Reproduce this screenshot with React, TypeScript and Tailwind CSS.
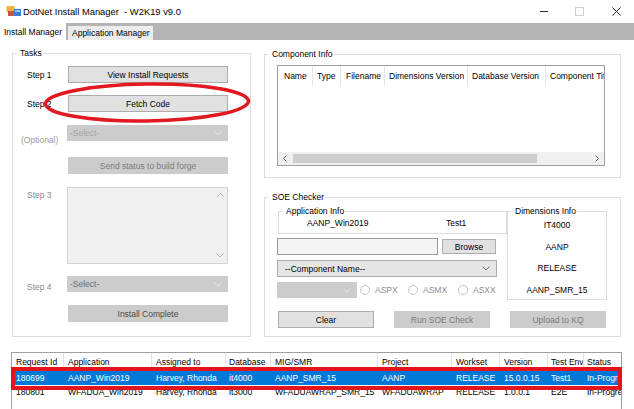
import React from 'react';

type Col = { label: string; w: string; pad: string };

const compCols: Col[] = [
  { label: 'Name', w: 'w-[35px]', pad: 'pl-[6px]' },
  { label: 'Type', w: 'w-[28px]', pad: 'pl-[4px]' },
  { label: 'Filename', w: 'w-[44px]', pad: 'pl-[5px]' },
  { label: 'Dimensions Version', w: 'w-[83px]', pad: 'pl-[4px]' },
  { label: 'Database Version', w: 'w-[78px]', pad: 'pl-[4px]' },
  { label: 'Component Title', w: 'w-[80px]', pad: 'pl-[4px]' },
];

const reqCols: Col[] = [
  { label: 'Request Id', w: 'w-[52px]', pad: 'pl-[4px]' },
  { label: 'Application', w: 'w-[88px]', pad: 'pl-[4px]' },
  { label: 'Assigned to', w: 'w-[74px]', pad: 'pl-[4px]' },
  { label: 'Database', w: 'w-[45px]', pad: 'pl-[3px]' },
  { label: 'MIG/SMR', w: 'w-[107px]', pad: 'pl-[4px]' },
  { label: 'Project', w: 'w-[74px]', pad: 'pl-[4px]' },
  { label: 'Workset', w: 'w-[48px]', pad: 'pl-[4px]' },
  { label: 'Version', w: 'w-[48px]', pad: 'pl-[4px]' },
  { label: 'Test Env', w: 'w-[36px]', pad: 'pl-[3px]' },
  { label: 'Status', w: 'w-[60px]', pad: 'pl-[3px]' },
];

const requests = [
  {
    id: '180699',
    selected: true,
    cells: ['180699', 'AANP_Win2019', 'Harvey, Rhonda', 'it4000', 'AANP_SMR_15', 'AANP', 'RELEASE', '15.0.0.15', 'Test1', 'In-Progress'],
  },
  {
    id: '180801',
    selected: false,
    cells: ['180801', 'WFADUA_Win2019', 'Harvey, Rhonda', 'it3000', 'WFADUAWRAP_SMR_15', 'WFADUAWRAP', 'RELEASE', '1.0.0.1', 'E2E', 'In-Progress'],
  },
];

const dimensions = ['IT4000', 'AANP', 'RELEASE', 'AANP_SMR_15'];

function Chevron({ color }: { color: string }) {
  return (
    <svg width="8" height="5" viewBox="0 0 8 5" className="shrink-0">
      <path d="M0.5 0.5 L4 4 L7.5 0.5" fill="none" stroke={color} strokeWidth="1" />
    </svg>
  );
}

function GroupBox({ title, className, children }: { title: string; className: string; children?: React.ReactNode }) {
  return (
    <fieldset className={`border border-[#dcdcdc] ${className}`}>
      <legend className="ml-[3px] pl-[4px] pr-[1px] leading-[10px]">{title}</legend>
      {children}
    </fieldset>
  );
}

function WinButton({ label, className }: { label: string; className: string }) {
  return <div className={`flex items-center justify-center ${className}`}>{label}</div>;
}

function Combo({ text, className, chevron }: { text: string; className: string; chevron: string }) {
  return (
    <div className={`flex items-center justify-between pl-[3px] pr-[6px] ${className}`}>
      <span>{text}</span>
      <Chevron color={chevron} />
    </div>
  );
}

function Radio({ label, className }: { label: string; className: string }) {
  return (
    <div className={`flex items-center ${className}`}>
      <span className="w-[10px] h-[10px] rounded-full border border-[#c4c4c4] bg-white" />
      <span className="ml-[5px] text-[#8c8c8c]">{label}</span>
    </div>
  );
}

function TitleBar() {
  return (
    <div className="h-[23px] flex items-center bg-white">
      <svg width="16" height="13" viewBox="0 0 16 13" className="ml-[6px]">
        <rect x="0.5" y="1" width="8" height="6" fill="#f4b23a" />
        <rect x="2" y="6" width="7" height="5" fill="#c8553d" />
        <rect x="8" y="4" width="7" height="7" fill="#3b7fd4" />
        <rect x="9" y="5" width="5" height="2" fill="#9cc4f0" />
      </svg>
      <span className="ml-[1px] text-[9.4px] whitespace-pre">DotNet Install Manager  - W2K19 v9.0</span>
      <div className="ml-auto flex items-center">
        <span className="w-[8px] h-px bg-[#222]" />
        <span className="ml-[27px] w-[9px] h-[9px] border border-[#cfcfcf]" />
        <svg width="9" height="9" viewBox="0 0 9 9" className="ml-[28px] mr-[13px]">
          <path d="M0.5 0.5 L8.5 8.5 M8.5 0.5 L0.5 8.5" stroke="#222" strokeWidth="1" />
        </svg>
      </div>
    </div>
  );
}

function TabStrip() {
  return (
    <div className="h-[17px] flex items-end bg-[#b4b4b4]">
      <div className="h-[17px] w-[66px] bg-white flex items-center pl-[4px]">Install Manager</div>
      <div className="ml-[2px] h-[14px] w-[85px] bg-[#ececec] flex items-center pl-[4px]">Application Manager</div>
    </div>
  );
}

function TaskRow({ label, rowClass, labelClass, children }: { label: string; rowClass: string; labelClass: string; children: React.ReactNode }) {
  return (
    <div className={`flex ${rowClass}`}>
      <div className={`w-[54px] leading-[10px] ${labelClass}`}>{label}</div>
      {children}
    </div>
  );
}

function Tasks() {
  const enabledBtn = 'w-[160px] h-[17px] bg-[#e1e1e1] border border-[#adadad]';
  const disabledBtn = 'w-[160px] h-[17px] bg-[#cccccc]';
  return (
    <GroupBox title="Tasks" className="w-[239px] h-[289px] shrink-0">
      <TaskRow label="Step 1" rowClass="mt-[8px] items-center" labelClass="pl-[14px]">
        <WinButton label="View Install Requests" className={`ml-[1px] ${enabledBtn}`} />
      </TaskRow>
      <TaskRow label="Step 2" rowClass="mt-[12px] items-center" labelClass="pl-[14px]">
        <WinButton label="Fetch Code" className={`ml-[1px] ${enabledBtn}`} />
      </TaskRow>
      <TaskRow label="(Optional)" rowClass="mt-[13px] items-start" labelClass="pl-[8px] mt-[10px] text-[#9a9a9a]">
        <Combo text="-Select-" className="w-[161px] h-[16px] bg-[#cccccc] text-[#a3a3a3]" chevron="#e6e6e6" />
      </TaskRow>
      <TaskRow label="" rowClass="mt-[12px] items-center" labelClass="">
        <WinButton label="Send status to build forge" className={`ml-[1px] text-[#7c7c7c] ${disabledBtn}`} />
      </TaskRow>
      <TaskRow label="Step 3" rowClass="mt-[13px] items-start" labelClass="pl-[14px] mt-[3px] text-[#8a8a8a]">
        <div className="w-[161px] h-[77px] bg-[#f0f0f0] border border-[#d4d4d4] flex justify-end">
          <div className="w-[14px] flex flex-col items-center justify-between py-[5px]">
            <svg width="7" height="4" viewBox="0 0 7 4">
              <path d="M0.5 3.5 L3.5 0.5 L6.5 3.5" fill="none" stroke="#b5b5b5" />
            </svg>
            <Chevron color="#b5b5b5" />
          </div>
        </div>
      </TaskRow>
      <TaskRow label="Step 4" rowClass="mt-[12px] items-start" labelClass="pl-[14px] mt-[6px] text-[#8a8a8a]">
        <Combo text="-Select-" className="w-[161px] h-[16px] bg-[#cccccc] text-[#6f6f6f]" chevron="#e6e6e6" />
      </TaskRow>
      <TaskRow label="" rowClass="mt-[13px] items-center" labelClass="">
        <WinButton label="Install Complete" className={`ml-[1px] text-[#4a4a4a] ${disabledBtn}`} />
      </TaskRow>
    </GroupBox>
  );
}

function ComponentInfo() {
  return (
    <GroupBox title="Component Info" className="mt-[1px] w-[357px] h-[129px]">
      <div className="mt-[6px] ml-[12px] w-[328px] h-[101px] border border-[#a0a0a0] bg-white flex flex-col overflow-hidden">
        <div className="h-[20px] flex shrink-0 whitespace-nowrap">
          {compCols.map((c) => (
            <div key={c.label} className={`${c.w} ${c.pad} shrink-0 h-full flex items-center border-r border-[#e5e5e5]`}>
              {c.label}
            </div>
          ))}
        </div>
        <div className="flex-1" />
        <div className="h-[13px] bg-[#f0f0f0] flex items-center shrink-0">
          <div className="w-[14px] flex justify-center">
            <svg width="4" height="7" viewBox="0 0 4 7">
              <path d="M3.5 0.5 L0.5 3.5 L3.5 6.5" fill="none" stroke="#606060" />
            </svg>
          </div>
          <div className="ml-[1px] w-[244px] h-[9px] bg-[#cdcdcd]" />
          <div className="ml-auto w-[14px] flex justify-center">
            <svg width="4" height="7" viewBox="0 0 4 7">
              <path d="M0.5 0.5 L3.5 3.5 L0.5 6.5" fill="none" stroke="#606060" />
            </svg>
          </div>
        </div>
      </div>
    </GroupBox>
  );
}

function SoeChecker() {
  const disabledBtn = 'w-[96px] h-[17px] bg-[#cccccc] text-[#7a7a7a]';
  return (
    <GroupBox title="SOE Checker" className="mt-[14px] w-[357px] h-[145px]">
      <div className="mt-[4px] ml-[12px] flex">
        <div className="w-[230px] flex flex-col">
          <GroupBox title="Application Info" className="ml-[1px] w-[229px] h-[28px]">
            <div className="h-[14px] flex items-center">
              <span className="ml-[28px] w-[139px]">AANP_Win2019</span>
              <span>Test1</span>
            </div>
          </GroupBox>
          <div className="mt-[4px] flex items-center">
            <div className="w-[161px] h-[17px] bg-[#f4f4f4] border border-[#9a9a9a]" />
            <WinButton label="Browse" className="ml-[4px] w-[54px] h-[15px] bg-[#e1e1e1] border border-[#adadad]" />
          </div>
          <Combo text="--Component Name--" className="mt-[5px] w-[220px] h-[17px] bg-[#e5e5e5] border border-[#acacac] pl-[7px]" chevron="#707070" />
          <div className="mt-[5px] flex items-center">
            <Combo text="" className="w-[80px] h-[16px] bg-[#cccccc]" chevron="#e6e6e6" />
            <Radio label="ASPX" className="ml-[3px] w-[48px]" />
            <Radio label="ASMX" className="w-[50px]" />
            <Radio label="ASXX" className="" />
          </div>
        </div>
        <GroupBox title="Dimensions Info" className="w-[100px] h-[94px]">
          <div className="mt-[4px] flex flex-col items-center gap-[10.5px] leading-[11px]">
            {dimensions.map((d) => (
              <span key={d}>{d}</span>
            ))}
          </div>
        </GroupBox>
      </div>
      <div className="mt-[11px] ml-[13px] flex gap-[20px]">
        <WinButton label="Clear" className="w-[96px] h-[17px] bg-[#e1e1e1] border border-[#adadad]" />
        <WinButton label="Run SOE Check" className={disabledBtn} />
        <WinButton label="Upload to KQ" className={disabledBtn} />
      </div>
    </GroupBox>
  );
}

function RequestList() {
  return (
    <div className="mt-[15px] ml-[11px] w-[611px] h-[70px] border border-[#a0a0a0] bg-white flex flex-col overflow-hidden whitespace-nowrap">
      <div className="h-[18px] flex shrink-0">
        {reqCols.map((c, i) => (
          <div
            key={c.label}
            className={`${c.w} ${c.pad} shrink-0 h-full flex items-center overflow-hidden ${i < reqCols.length - 1 ? 'border-r border-[#e5e5e5]' : ''}`}
          >
            {c.label}
          </div>
        ))}
      </div>
      {requests.map((r) => (
        <div key={r.id} className={`h-[14px] flex shrink-0 ${r.selected ? 'bg-[#0078d7] text-white' : ''}`}>
          {r.cells.map((cell, i) => (
            <div key={i} className={`${reqCols[i].w} ${reqCols[i].pad} shrink-0 h-full flex items-center overflow-hidden`}>
              {cell}
            </div>
          ))}
        </div>
      ))}
    </div>
  );
}

export default function App() {
  return (
    <div className="relative w-[634px] h-[409px] overflow-hidden bg-white text-black text-[8.5px] leading-[10px] font-['Liberation_Sans',Arial,sans-serif]">
      <TitleBar />
      <TabStrip />
      <div className="flex pt-[8px] pl-[12px] gap-[13px]">
        <Tasks />
        <div className="flex flex-col">
          <ComponentInfo />
          <SoeChecker />
        </div>
      </div>
      <RequestList />

      {/* red annotations drawn on top of the screenshot */}
      <svg className="absolute left-[43px] top-[81px] pointer-events-none" width="210" height="44" viewBox="0 0 210 44">
        <ellipse cx="104" cy="21.5" rx="101.5" ry="18.5" fill="none" stroke="#e11a22" strokeWidth="3.5" transform="rotate(-0.8 104 21.5)" />
      </svg>
      <div className="absolute left-[11px] top-[367px] w-[611px] h-[23px] border-[4px] border-[#e3141c] pointer-events-none" />
    </div>
  );
}
